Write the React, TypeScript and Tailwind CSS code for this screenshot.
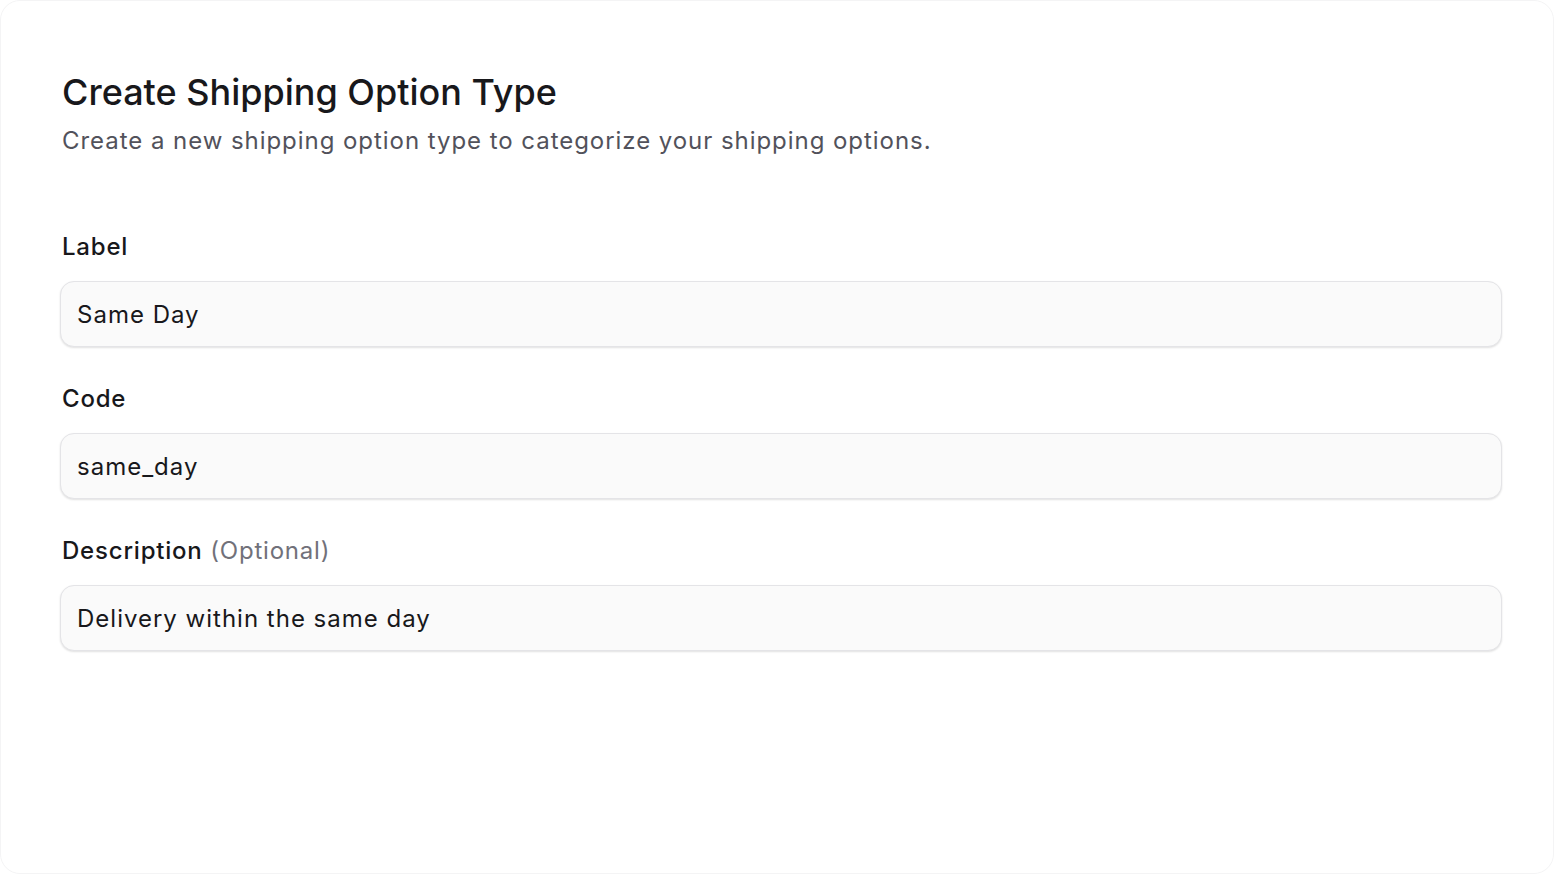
const fields = [
  { label: "Label", value: "Same Day" },
  { label: "Code", value: "same_day" },
  { label: "Description", value: "Delivery within the same day", optional: true },
];

export default function App() {
  return (
    <div
      className="h-[874px] w-full bg-white"
      style={{ fontFamily: "Inter, 'Noto Sans', sans-serif" }}
    >
      <div className="h-full w-full rounded-[20px] border border-[#f4f4f5] pl-[59px] pr-[51px] pt-[69px]">
        <h1 className="text-[36px] leading-[44px] font-medium tracking-[0px] text-[#18181b] pl-[2px]">
          Create Shipping Option Type
        </h1>
        <p className="mt-[9px] text-[24px] leading-[36px] tracking-[0.95px] text-[#52525b] pl-[2px]">
          Create a new shipping option type to categorize your shipping options.
        </p>
        <div className="mt-[70px] flex flex-col gap-[34px]">
          {fields.map((f) => (
            <div key={f.label} className="flex flex-col gap-[16px]">
              <label className="text-[24px] leading-[36px] font-medium tracking-[0.8px] text-[#18181b] pl-[2px]">
                {f.label}
                {f.optional && (
                  <span className="font-normal text-[#71717a]"> (Optional)</span>
                )}
              </label>
              <input
                readOnly
                value={f.value}
                className="h-[66px] w-full rounded-[14px] border border-[#e4e4e7] bg-[#fafafa] px-[16px] text-[24px] tracking-[1px] text-[#18181b] shadow-[0_1px_2px_rgba(0,0,0,0.12)] outline-none"
                style={{ fontFamily: "Inter, 'Noto Sans', sans-serif" }}
              />
            </div>
          ))}
        </div>
      </div>
    </div>
  );
}
